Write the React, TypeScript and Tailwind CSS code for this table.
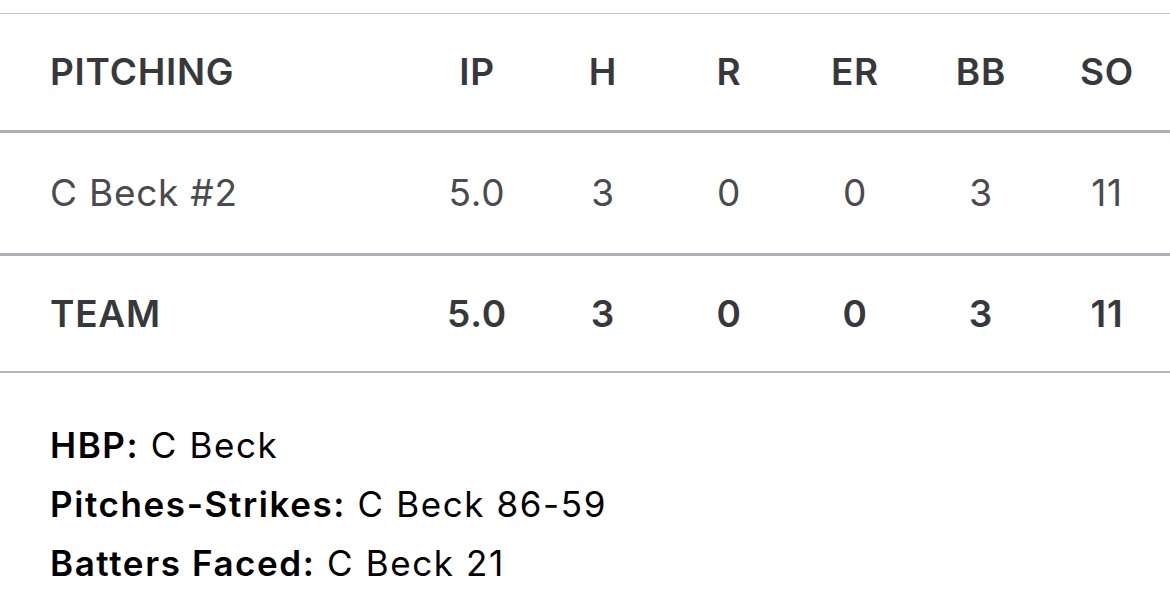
const columns = ["IP", "H", "R", "ER", "BB", "SO"];

const pitchers = [{ name: "C Beck #2", stats: ["5.0", "3", "0", "0", "3", "11"] }];
const team = ["5.0", "3", "0", "0", "3", "11"];

const notes = [
  { label: "HBP:", value: "C Beck" },
  { label: "Pitches-Strikes:", value: "C Beck 86-59" },
  { label: "Batters Faced:", value: "C Beck 21" },
];

function Row({
  label,
  values,
  className,
}: {
  label: string;
  values: string[];
  className: string;
}) {
  return (
    <div className={`flex items-center text-[37px] tracking-[0.75px] ${className}`}>
      <div className="flex-1 pl-[50px]">{label}</div>
      {values.map((v, i) => (
        <div key={i} className="w-[126px] text-center">
          {v}
        </div>
      ))}
    </div>
  );
}

export default function App() {
  return (
    <div
      className="w-[1170px] h-[590px] bg-white overflow-hidden pt-[13px]"
      style={{ fontFamily: "Inter, 'Liberation Sans', sans-serif" }}
    >
      <div className="border-t border-[#c4c4c6]">
        <Row
          label="PITCHING"
          values={columns}
          className="h-[119px] border-b-[3px] border-[#abb0b6] font-semibold text-[#37383c]"
        />
        {pitchers.map((p) => (
          <Row
            key={p.name}
            label={p.name}
            values={p.stats}
            className="h-[123px] border-b-[3px] border-[#abb0b6] text-[#4a4a4f]"
          />
        ))}
        <Row
          label="TEAM"
          values={team}
          className="h-[117px] border-b-2 border-[#b5b6b8] font-semibold text-[#37383c]"
        />
      </div>
      <div className="pl-[50px] pt-[43px] text-[35px] leading-[59px] tracking-[1.6px] text-black">
        {notes.map((n) => (
          <div key={n.label}>
            <span className="font-semibold">{n.label}</span> {n.value}
          </div>
        ))}
      </div>
    </div>
  );
}
